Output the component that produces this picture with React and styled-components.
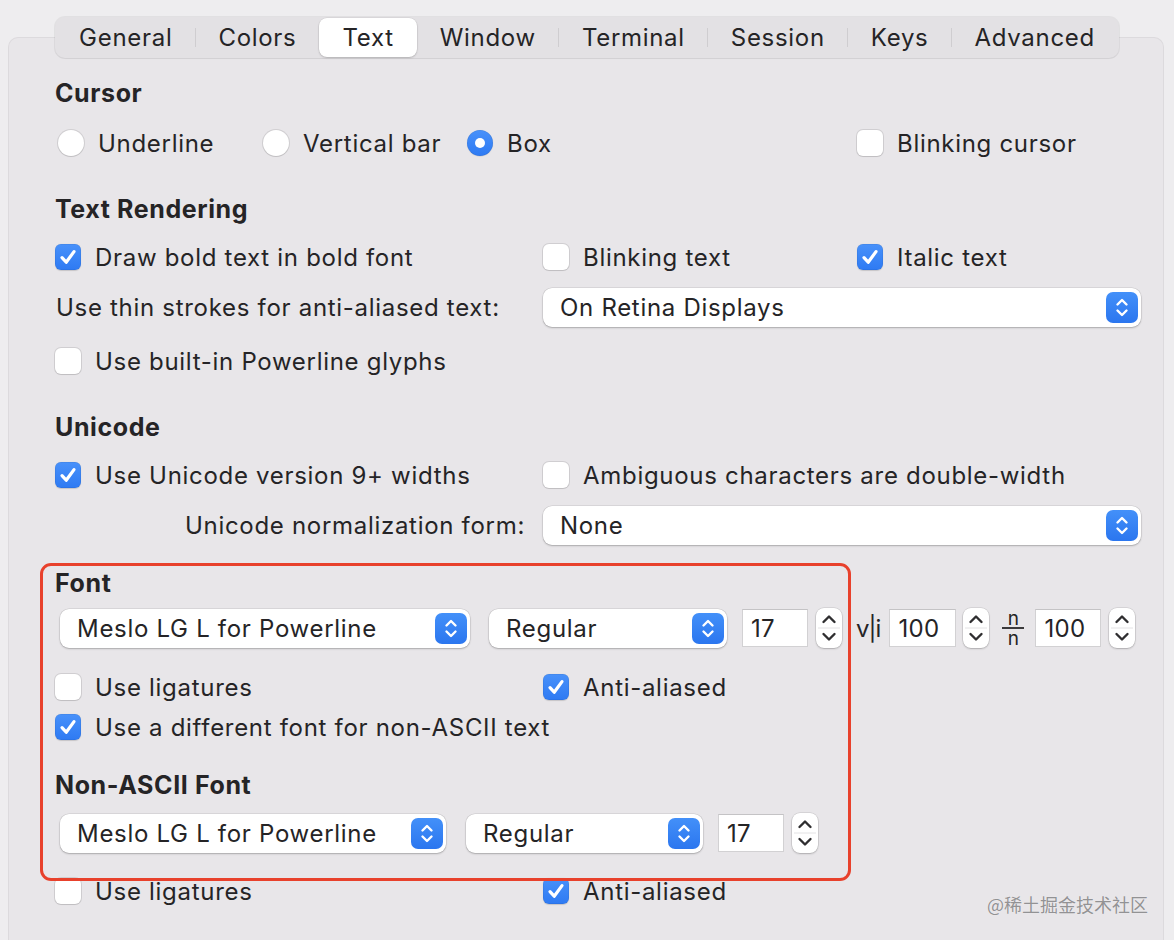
import React from 'react';
import styled, { createGlobalStyle } from 'styled-components';

const GlobalStyle = createGlobalStyle`
  html, body { margin: 0; padding: 0; background: #eeedef; }
  body {
    font-family: Inter, "Noto Sans", "Liberation Sans", sans-serif;
    color: #252426;
    letter-spacing: 0.7px;
    -webkit-font-smoothing: antialiased;
  }
  * { box-sizing: border-box; }
`;

const Window = styled.div`
  position: relative;
  width: 1174px;
  height: 940px;
  overflow: hidden;
  background: #eeedef;
  padding-top: 17px;
  display: flex;
  flex-direction: column;
`;

const TabBar = styled.div`
  align-self: center;
  position: relative;
  z-index: 1;
  display: flex;
  height: 41px;
  padding: 1px;
  background: #e3e1e4;
  border-radius: 10px;
  box-shadow: 0 0 0 1px rgba(0, 0, 0, 0.05), 0 1px 1px rgba(0, 0, 0, 0.04);
`;

const Tab = styled.div`
  position: relative;
  display: flex;
  align-items: center;
  padding: 0 23px;
  font-size: 24px;
  border-radius: 8px;
  background: ${(p) => (p.$active ? '#ffffff' : 'transparent')};
  box-shadow: ${(p) =>
    p.$active ? '0 1px 2px rgba(0,0,0,0.18), 0 0 0 0.5px rgba(0,0,0,0.08)' : 'none'};
  &::before {
    content: '';
    display: ${(p) => (p.$sep ? 'block' : 'none')};
    position: absolute;
    left: -0.5px;
    top: 10px;
    bottom: 10px;
    width: 1px;
    background: #cfcdd0;
  }
`;

const Panel = styled.div`
  flex: 1;
  margin: -21px 10px 0 8px;
  background: #e8e6e9;
  border: 1px solid #dcdadd;
  border-bottom: none;
  border-radius: 10px 10px 0 0;
  padding: 40px 22px 0 46px;
`;

const Heading = styled.div`
  font-size: 25px;
  font-weight: 700;
  letter-spacing: 0.6px;
  line-height: 30px;
  height: 30px;
  margin-top: ${(p) => p.$mt || 0}px;
`;

const Row = styled.div`
  display: grid;
  grid-template-columns: 488px 314px 1fr;
  align-items: center;
  height: 40px;
  margin-top: ${(p) => p.$mt || 0}px;
`;

const RadioGroup = styled.div`
  grid-column: 1 / 3;
  display: flex;
  align-items: center;
  padding-left: 3px;
`;

const Item = styled.label`
  display: flex;
  align-items: center;
  gap: 14px;
  font-size: 24px;
  white-space: nowrap;
  width: ${(p) => (p.$w ? `${p.$w}px` : 'auto')};
`;

const Box = styled.span`
  flex: none;
  width: 26px;
  height: 26px;
  border-radius: 6px;
  display: flex;
  align-items: center;
  justify-content: center;
  background: ${(p) => (p.$on ? 'linear-gradient(#4891fa, #2e7af3)' : '#ffffff')};
  box-shadow: ${(p) =>
    p.$on
      ? 'inset 0 0 0 0.5px rgba(0,0,0,0.1), 0 0.5px 1px rgba(0,0,0,0.15)'
      : '0 0 0 1px rgba(0,0,0,0.1), 0 1px 1px rgba(0,0,0,0.08)'};
`;

const Circle = styled(Box)`
  border-radius: 50%;
  &::after {
    content: '';
    display: ${(p) => (p.$on ? 'block' : 'none')};
    width: 10px;
    height: 10px;
    border-radius: 50%;
    background: #ffffff;
  }
`;

const Label = styled.div`
  font-size: 24px;
  white-space: nowrap;
  text-align: ${(p) => (p.$right ? 'right' : 'left')};
  padding: ${(p) => (p.$right ? '0 18px 0 0' : '0 0 0 1px')};
`;

const Popup = styled.div`
  grid-column: ${(p) => (p.$span ? '2 / 4' : 'auto')};
  flex: none;
  display: flex;
  align-items: center;
  justify-content: space-between;
  height: 39px;
  width: ${(p) => (p.$w ? `${p.$w}px` : 'auto')};
  margin-left: ${(p) => p.$ml || 0}px;
  padding: 0 3px 0 17px;
  background: #ffffff;
  border-radius: 9px;
  font-size: 24px;
  white-space: nowrap;
  box-shadow: 0 0 0 0.5px rgba(0, 0, 0, 0.12), 0 1px 2px rgba(0, 0, 0, 0.22);
`;

const Arrows = styled.span`
  flex: none;
  width: 32px;
  height: 31px;
  border-radius: 7px;
  background: linear-gradient(#4390f9, #2b76ef);
  display: flex;
  align-items: center;
  justify-content: center;
`;

const Controls = styled.div`
  display: flex;
  align-items: center;
  height: 40px;
  padding-left: 5px;
  margin-top: ${(p) => p.$mt || 0}px;
`;

const Field = styled.div`
  flex: none;
  width: ${(p) => p.$w || 66}px;
  height: 38px;
  margin-left: ${(p) => p.$ml || 0}px;
  padding-left: 8px;
  display: flex;
  align-items: center;
  background: #ffffff;
  border: 1px solid #d2d1d3;
  border-top-color: #c4c3c5;
  font-size: 24px;
  letter-spacing: 0.3px;
`;

const Stepper = styled.span`
  flex: none;
  width: 26px;
  height: 40px;
  margin-left: ${(p) => p.$ml || 0}px;
  border-radius: 8px;
  background: #ffffff;
  box-shadow: 0 0 0 0.5px rgba(0, 0, 0, 0.14), 0 1px 2px rgba(0, 0, 0, 0.2);
  display: flex;
`;

const Glyph = styled.span`
  flex: none;
  margin-left: ${(p) => p.$ml || 0}px;
  font-size: 24px;
  letter-spacing: -1px;
`;

const Fraction = styled.span`
  flex: none;
  margin-left: ${(p) => p.$ml || 0}px;
  width: 22px;
  display: flex;
  flex-direction: column;
  align-items: center;
  font-size: 19px;
  line-height: 15px;
  letter-spacing: 0;
  &::before {
    content: 'n';
  }
  &::after {
    content: 'n';
  }
`;

const FractionBar = styled.span`
  width: 22px;
  height: 2px;
  background: #3a393b;
  margin: 1px 0 2px;
`;

const Annotation = styled.div`
  position: absolute;
  left: 40px;
  top: 563px;
  width: 811px;
  height: 318px;
  border: 3px solid #e8412c;
  border-radius: 11px;
  pointer-events: none;
  z-index: 2;
`;

const Watermark = styled.div`
  position: absolute;
  left: 987px;
  top: 892px;
  font-family: "Noto Sans CJK SC", "Noto Sans", sans-serif;
  font-size: 18px;
  line-height: 24px;
  letter-spacing: 0;
  color: rgba(120, 120, 122, 0.8);
  text-shadow: 0 0 1px rgba(255, 255, 255, 0.6);
  white-space: nowrap;
`;

const CheckMark = () => (
  <svg width="26" height="26" viewBox="0 0 26 26">
    <path d="M7 13.6 L11.2 18.2 L19 7.6" fill="none" stroke="#fff" strokeWidth="3.2" strokeLinecap="round" strokeLinejoin="round" />
  </svg>
);

const PopArrows = () => (
  <Arrows>
    <svg width="32" height="31" viewBox="0 0 32 31">
      <path d="M11.5 12.5 L16 8 L20.5 12.5 M11.5 18.5 L16 23 L20.5 18.5" fill="none" stroke="#fff" strokeWidth="2.4" strokeLinecap="round" strokeLinejoin="round" />
    </svg>
  </Arrows>
);

const StepArrows = ({ ml }) => (
  <Stepper $ml={ml}>
    <svg width="26" height="40" viewBox="0 0 26 40">
      <line x1="2" y1="20" x2="24" y2="20" stroke="#e3e2e4" strokeWidth="1" />
      <path d="M7.5 14 L13 8.5 L18.5 14 M7.5 26 L13 31.5 L18.5 26" fill="none" stroke="#2f2e30" strokeWidth="2.4" strokeLinecap="round" strokeLinejoin="round" />
    </svg>
  </Stepper>
);

const Check = ({ on, children, w }) => (
  <Item $w={w}>
    <Box $on={on}>{on && <CheckMark />}</Box>
    {children}
  </Item>
);

const Radio = ({ on, children, w }) => (
  <Item $w={w}>
    <Circle $on={on} />
    {children}
  </Item>
);

const Select = ({ children, w, ml, span }) => (
  <Popup $w={w} $ml={ml} $span={span}>
    <span>{children}</span>
    <PopArrows />
  </Popup>
);

const tabs = ['General', 'Colors', 'Text', 'Window', 'Terminal', 'Session', 'Keys', 'Advanced'];
const activeTab = 2;

export default function App() {
  return (
    <>
      <GlobalStyle />
      <Window>
        <TabBar>
          {tabs.map((t, i) => (
            <Tab
              key={t}
              $active={i === activeTab}
              $sep={i > 0 && i !== activeTab && i - 1 !== activeTab}
            >
              {t}
            </Tab>
          ))}
        </TabBar>
        <Panel>
          <Heading>Cursor</Heading>
          <Row $mt={15}>
            <RadioGroup>
              <Radio w={205}>Underline</Radio>
              <Radio w={204}>Vertical bar</Radio>
              <Radio on>Box</Radio>
            </RadioGroup>
            <Check>Blinking cursor</Check>
          </Row>

          <Heading $mt={31}>Text Rendering</Heading>
          <Row $mt={13}>
            <Check on>Draw bold text in bold font</Check>
            <Check>Blinking text</Check>
            <Check on>Italic text</Check>
          </Row>
          <Row $mt={10}>
            <Label>Use thin strokes for anti-aliased text:</Label>
            <Select span>On Retina Displays</Select>
          </Row>
          <Row $mt={14}>
            <Check>Use built-in Powerline glyphs</Check>
          </Row>

          <Heading $mt={31}>Unicode</Heading>
          <Row $mt={13}>
            <Check on>Use Unicode version 9+ widths</Check>
            <Check>Ambiguous characters are double-width</Check>
          </Row>
          <Row $mt={10}>
            <Label $right>Unicode normalization form:</Label>
            <Select span>None</Select>
          </Row>

          <Heading $mt={23}>Font</Heading>
          <Controls $mt={10}>
            <Select w={410}>Meslo LG L for Powerline</Select>
            <Select w={238} ml={19}>Regular</Select>
            <Field $ml={15}>17</Field>
            <StepArrows ml={8} />
            <Glyph $ml={14}>v|i</Glyph>
            <Field $ml={9} $w={67}>100</Field>
            <StepArrows ml={7} />
            <Fraction $ml={13}><FractionBar /></Fraction>
            <Field $ml={11}>100</Field>
            <StepArrows ml={8} />
          </Controls>
          <Row $mt={19}>
            <Check>Use ligatures</Check>
            <Check on>Anti-aliased</Check>
          </Row>
          <Row>
            <Check on>Use a different font for non-ASCII text</Check>
          </Row>

          <Heading $mt={23}>Non-ASCII Font</Heading>
          <Controls $mt={13}>
            <Select w={386}>Meslo LG L for Powerline</Select>
            <Select w={237} ml={20}>Regular</Select>
            <Field $ml={15}>17</Field>
            <StepArrows ml={8} />
          </Controls>
          <Row $mt={18}>
            <Check>Use ligatures</Check>
            <Check on>Anti-aliased</Check>
          </Row>
        </Panel>
        <Annotation />
        <Watermark>@稀土掘金技术社区</Watermark>
      </Window>
    </>
  );
}
